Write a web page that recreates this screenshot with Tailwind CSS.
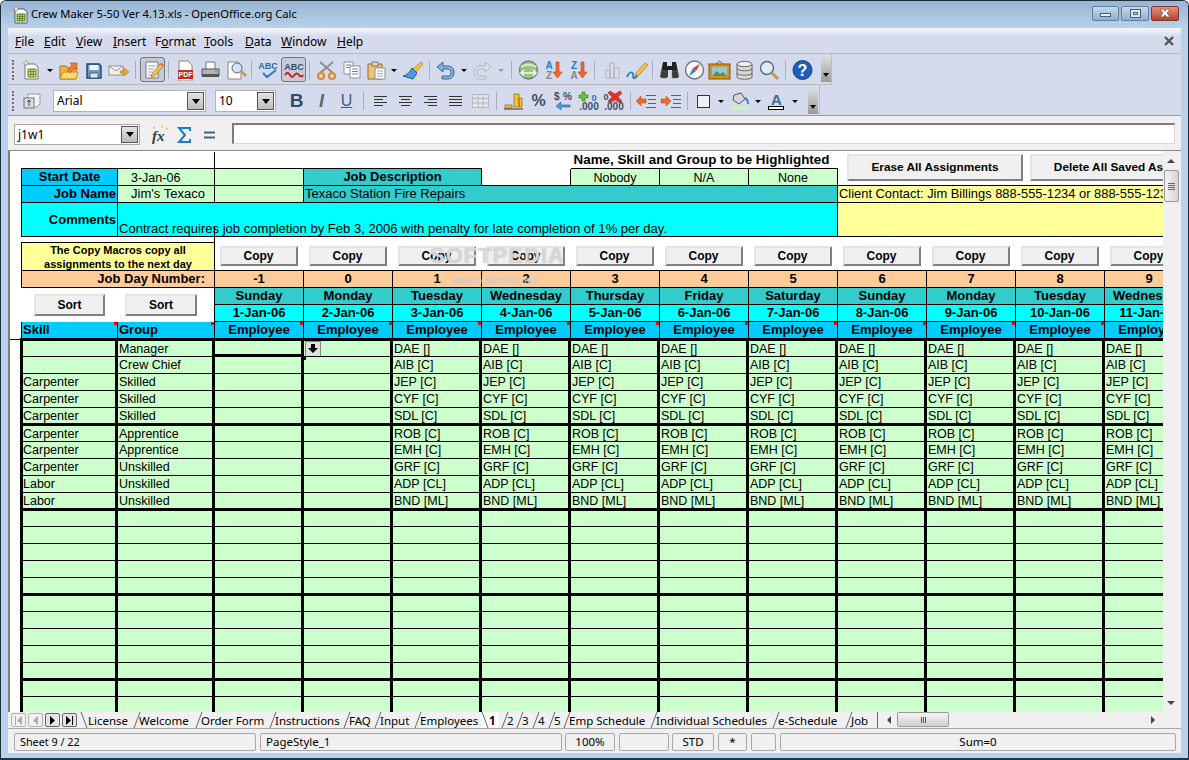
<!DOCTYPE html>
<html lang="en" class="bg-white">
<head>
  <meta charset="UTF-8" />
  <title>Crew Maker 5-50 Ver 4.13.xls - OpenOffice.org Calc</title>
  <script src="https://cdn.jsdelivr.net/npm/@tailwindcss/browser@4"></script>
</head>
<body class="w-[1189px] h-[760px] overflow-hidden rounded-t-[6px] border border-b-2 border-[#1d2f3d] border-b-[#16384a] bg-[#b9d1ea] font-['Noto_Sans',sans-serif] text-[12px] text-black">

  <!-- title bar -->
  <header class="h-[27px] flex items-center pl-[11px] bg-linear-to-b from-[#98b5d3] to-[#b9d1ea]">
    <svg class="w-[18px] h-[18px]" viewBox="0 0 18 18"><path d="M3 3h9l3 3v11H3z" fill="#fff" stroke="#555"/><path d="M5 8h8v7H5z" fill="#e4ea8c" stroke="#4d7a1c"/><path d="M7.7 8v7M10.3 8v7M5 10.3h8M5 12.7h8" stroke="#4d7a1c"/><path d="M4 0l1 2 2 1-2 1-1 2-1-2-2-1 2-1z" fill="#efe7b0" stroke="#777" stroke-width=".5"/></svg>
    <span class="ml-px text-[11.2px]">Crew Maker 5-50 Ver 4.13.xls - OpenOffice.org Calc</span>
    <div class="ml-auto flex mr-[9px] mb-[3px] gap-[2px]">
      <div class="w-[27px] h-[15px] rounded-[2px] border border-[#5f7f9f] bg-linear-to-b from-[#c5d9ee] to-[#8fb0d2] flex items-center justify-center"><div class="w-[11px] h-[4px] mt-[4px] bg-[#e8eef5] border border-[#4a5f78]"></div></div>
      <div class="w-[28px] h-[15px] rounded-[2px] border border-[#5f7f9f] bg-linear-to-b from-[#c5d9ee] to-[#8fb0d2] flex items-center justify-center"><div class="w-[11px] h-[9px] bg-[#dfe8f2] border border-[#4a5f78] flex items-center justify-center"><div class="w-[5px] h-[3px] border border-[#4a5f78]"></div></div></div>
      <div class="w-[28px] h-[15px] rounded-[2px] border border-[#7a3a30] bg-linear-to-b from-[#e2907f] to-[#b8412e] flex items-center justify-center">
        <svg class="w-[14px] h-[10px]" viewBox="0 0 14 10"><path d="M2 1h3l2 2 2-2h3L9 5l3 4H9L7 7 5 9H2l3-4z" fill="#fff" stroke="#6b3a32" stroke-width=".6"/></svg>
      </div>
    </div>
  </header>

  <main class="ml-[7px] w-[1173px] h-[725px] bg-[#f0f0f0] flex flex-col">
    <!-- menu -->
    <nav class="h-[26px] shrink-0 flex items-center pl-[7px] pt-[2px] bg-linear-to-b from-[#f6f8fc] to-[#d5daec] to-[35%] border-b border-[#bcbcbc] relative">
      <span class="w-[29px]"><u>F</u>ile</span>
      <span class="w-[32px]"><u>E</u>dit</span>
      <span class="w-[37px]"><u>V</u>iew</span>
      <span class="w-[42px]"><u>I</u>nsert</span>
      <span class="w-[49px]">F<u>o</u>rmat</span>
      <span class="w-[41px]"><u>T</u>ools</span>
      <span class="w-[36px]"><u>D</u>ata</span>
      <span class="w-[56px]"><u>W</u>indow</span>
      <span><u>H</u>elp</span>
      <svg class="absolute right-[7px] top-[8px] w-[10px] h-[10px]" viewBox="0 0 10 10"><path d="M1 1l8 8M9 1L1 9" stroke="#555" stroke-width="2.4"/></svg>
    </nav>

    <!-- standard toolbar -->
    <div class="h-[31px] shrink-0 bg-[#d5daec]">
      <div class="w-[824px] h-[31px] flex items-center pl-[4px] pt-px border-r border-b border-[#bcbcbc]">
        <div class="w-[2px] h-[20px] border-l-2 border-dotted border-[#6f6f6f]"></div>
        <svg class="ml-[5px] w-[25px] h-[22px]" viewBox="0 0 25 22"><path d="M6 5h10l3 3v12H6z" fill="#fff" stroke="#777"/><path d="M9 10h8v8H9z" fill="#dfe98a" stroke="#5c8a1e"/><path d="M11.7 10v8M14.3 10v8M9 12.7h8M9 15.3h8" stroke="#5c8a1e"/><path d="M7 1l1 2 2 1-2 1-1 2-1-2-2-1 2-1z" fill="#f4e9a0" stroke="#888" stroke-width=".5"/></svg>
        <svg class="w-[12px] h-[22px]" viewBox="0 0 12 22"><path d="M3 10h6l-3 3z" fill="#000"/></svg>
        <svg class="w-[25px] h-[22px]" viewBox="0 0 25 22"><path d="M4 7h6l2 2h8v11H4z" fill="#f2b83c" stroke="#a8781c"/><path d="M4 20l3-7h15l-2 7z" fill="#ffd86e" stroke="#c08c24"/><path d="M11 11l5-5-2-2h7v7l-2-2-5 5z" fill="#ee7d2b" stroke="#b2521a" stroke-width=".6"/></svg>
        <svg class="w-[25px] h-[22px]" viewBox="0 0 25 22"><path d="M6 5h12l2 2v12H6z" fill="#6f9cc2" stroke="#1d4468" stroke-width="1.400"/><rect x="8.500" y="6" width="9" height="5" fill="#f2f6fa"/><rect x="9" y="14" width="8" height="5" fill="#dde3e9" stroke="#1d4468" stroke-width=".7"/></svg>
        <svg class="w-[25px] h-[22px]" viewBox="0 0 25 22"><rect x="3" y="7" width="14" height="9" fill="#f3f3f3" stroke="#909090"/><path d="M3 7l7 5 7-5" fill="none" stroke="#909090"/><path d="M14 12h4v-3l5 4-5 4v-3h-4z" fill="#f2a93b" stroke="#b8741a" stroke-width=".7"/></svg>
        <div class="ml-[4px] mr-[4px] w-px h-[18px] bg-[#a9adbd]"></div>
        <div class="w-[25px] h-[25px] rounded-[3px] border border-[#777] bg-[#c6cad8] flex items-center justify-center">
          <svg class="w-[22px] h-[22px]" viewBox="0 0 22 22"><path d="M4 3h12v16H4z" fill="#fff" stroke="#777"/><path d="M6 7h8M6 10h6M6 13h5M6 16h5" stroke="#8aa0b8"/><path d="M10 15l8-10 3 2-8 10-4 1.500z" fill="#f6c542" stroke="#a06a20" stroke-width=".7"/><path d="M18 5l3 2 1-1.500-3-2z" fill="#e46a5a"/></svg>
        </div>
        <div class="ml-[3px] mr-[4px] w-px h-[18px] bg-[#a9adbd]"></div>
        <svg class="w-[25px] h-[22px]" viewBox="0 0 25 22"><path d="M6 2h9l4 4v16H6z" fill="#fff" stroke="#888"/><rect x="5" y="11" width="15" height="9" fill="#cc2a1e"/><text x="12.500" y="18" text-anchor="middle" font-size="7" font-weight="700" font-family="Liberation Sans" fill="#fff">PDF</text></svg>
        <svg class="w-[25px] h-[22px]" viewBox="0 0 25 22"><path d="M8 3h9v8H8z" fill="#fff" stroke="#777"/><path d="M4 10h17v7H4z" fill="#b4b4b4" stroke="#555"/><path d="M4 15h17v3H4z" fill="#555"/><circle cx="18" cy="12.500" r="1" fill="#55c04a"/></svg>
        <svg class="w-[25px] h-[22px]" viewBox="0 0 25 22"><path d="M5 3h10l3 3v14H5z" fill="#fff" stroke="#888"/><circle cx="14" cy="9" r="5" fill="#cfe4f5" stroke="#667"/><path d="M18 12l5 5" stroke="#c79a3c" stroke-width="2.500"/></svg>
        <div class="ml-[3px] mr-[4px] w-px h-[18px] bg-[#a9adbd]"></div>
        <svg class="w-[25px] h-[22px]" viewBox="0 0 25 22"><text x="12" y="10" text-anchor="middle" font-size="9" font-weight="700" font-family="Liberation Sans" fill="#2f6a9f">ABC</text><path d="M7 14l4 4 9-7" fill="none" stroke="#2d7fc4" stroke-width="2.200"/></svg>
        <div class="w-[25px] h-[25px] rounded-[3px] border border-[#777] bg-[#c6cad8] flex items-center justify-center">
          <svg class="w-[22px] h-[20px]" viewBox="0 0 22 20"><text x="11" y="10" text-anchor="middle" font-size="9" font-weight="700" font-family="Liberation Sans" fill="#2f4f6f">ABC</text><path d="M2 15c2-3 3-3 5 0s3 2 4.500 0 3-2 4.500 0 3 2 4 0" fill="none" stroke="#cc1f1f" stroke-width="2"/></svg>
        </div>
        <div class="ml-[3px] mr-[4px] w-px h-[18px] bg-[#a9adbd]"></div>
        <svg class="w-[25px] h-[22px]" viewBox="0 0 25 22"><path d="M6 3l13 11M19 3L6 14" stroke="#8a8f96" stroke-width="2"/><circle cx="7" cy="17" r="3" fill="none" stroke="#e08a2a" stroke-width="2.200"/><circle cx="18" cy="17" r="3" fill="none" stroke="#e08a2a" stroke-width="2.200"/></svg>
        <svg class="w-[25px] h-[22px]" viewBox="0 0 25 22"><path d="M5 3h9v12H5z" fill="#fff" stroke="#8a8f96"/><path d="M11 7h10v12H11z" fill="#fff" stroke="#8a8f96"/><path d="M13 10h6M13 12.500h6M13 15h6M7 6h5M7 8.500h3" stroke="#4a8fc8"/></svg>
        <svg class="w-[25px] h-[22px]" viewBox="0 0 25 22"><path d="M4 5h14v15H4z" fill="#ecc277" stroke="#8e6a2c"/><path d="M8 3h6v4H8z" fill="#d8d8d8" stroke="#777"/><path d="M11 9h10v11H11z" fill="#fff" stroke="#8a8f96"/><path d="M13 12h6M13 14.500h6M13 17h6" stroke="#9aa"/></svg>
        <svg class="w-[11px] h-[22px]" viewBox="0 0 11 22"><path d="M2 10h6l-3 3z" fill="#000"/></svg>
        <svg class="w-[25px] h-[22px]" viewBox="0 0 25 22"><path d="M13 10l8-7 2 2-7 8z" fill="#f3c440" stroke="#a8781c" stroke-width=".7"/><path d="M12 9l5 5-4 6-10-3c4-1 6-3 9-8z" fill="#4f9ad8" stroke="#24608f"/></svg>
        <div class="ml-[4px] mr-[3px] w-px h-[18px] bg-[#a9adbd]"></div>
        <svg class="w-[25px] h-[22px]" viewBox="0 0 25 22"><path d="M10 3L4 8l6 5v-3h5c2 0 3 1.500 3 3.500S17 17 15 17H9v3h6c4 0 6-3 6-6.500S19 7 15 7h-5z" fill="#7eb2d8" stroke="#356a94"/></svg>
        <svg class="w-[12px] h-[22px]" viewBox="0 0 12 22"><path d="M3 10h6l-3 3z" fill="#000"/></svg>
        <svg class="w-[25px] h-[22px]" viewBox="0 0 25 22"><path d="M15 3l6 5-6 5v-3h-5c-2 0-3 1.500-3 3.500S8 17 10 17h6v3h-6c-4 0-6-3-6-6.500S6 7 10 7h5z" fill="#dcdfe8" stroke="#b0b4c0"/></svg>
        <svg class="w-[12px] h-[22px]" viewBox="0 0 12 22"><path d="M3 10h6l-3 3z" fill="#9a9a9a"/></svg>
        <div class="ml-[4px] mr-[4px] w-px h-[18px] bg-[#a9adbd]"></div>
        <svg class="w-[25px] h-[22px]" viewBox="0 0 25 22"><circle cx="12.500" cy="11" r="9" fill="#9cc47a" stroke="#6a7f8a" stroke-width="1.400"/><path d="M5 8c3-3 12-3 15 0" fill="none" stroke="#dfe8c0" stroke-width="2"/><path d="M6 14h13M8 11l-3 3 3 3M17 11l3 3-3 3" fill="none" stroke="#eef3f6" stroke-width="1.600"/></svg>
        <svg class="w-[25px] h-[22px]" viewBox="0 0 25 22"><text x="8" y="10" text-anchor="middle" font-size="10" font-weight="700" font-family="Liberation Sans" fill="#2280d0">A</text><text x="8" y="20" text-anchor="middle" font-size="10" font-weight="700" font-family="Liberation Sans" fill="#888">Z</text><path d="M15 3h3v10h3l-4.500 6L12 13h3z" fill="#ee6a2b" stroke="#b2421a" stroke-width=".6"/></svg>
        <svg class="w-[25px] h-[22px]" viewBox="0 0 25 22"><text x="8" y="10" text-anchor="middle" font-size="10" font-weight="700" font-family="Liberation Sans" fill="#2280d0">Z</text><text x="8" y="20" text-anchor="middle" font-size="10" font-weight="700" font-family="Liberation Sans" fill="#888">A</text><path d="M15 3h3v10h3l-4.500 6L12 13h3z" fill="#ee6a2b" stroke="#b2421a" stroke-width=".6"/></svg>
        <div class="ml-[3px] mr-[5px] w-px h-[18px] bg-[#a9adbd]"></div>
        <svg class="w-[25px] h-[22px]" viewBox="0 0 25 22"><path d="M6 11h4v8H6zM10 4h4v15h-4zM14 9h5v10h-5z" fill="#dcdfe8" stroke="#aeb2bd"/></svg>
        <svg class="w-[25px] h-[22px]" viewBox="0 0 25 22"><path d="M2 18c2-5 5-6 6-3s-1 4 1 4 3-2 4-3" fill="none" stroke="#2d7fc4" stroke-width="1.800"/><path d="M11 14L20 4l3 2-9 10-4 1z" fill="#f6c542" stroke="#a06a20" stroke-width=".7"/></svg>
        <div class="ml-[2px] mr-[4px] w-px h-[18px] bg-[#a9adbd]"></div>
        <svg class="w-[25px] h-[22px]" viewBox="0 0 25 22"><path d="M6 3h4v4h5V3h4l3 15h-7v-7h-4v7H3z" fill="#222"/><path d="M4 12h6v7H4zM15 12h6v7h-6z" fill="#3a3a3a" stroke="#777" stroke-width=".5"/></svg>
        <svg class="w-[25px] h-[22px]" viewBox="0 0 25 22"><circle cx="12.500" cy="11" r="9" fill="#f4f6f8" stroke="#70787f" stroke-width="1.400"/><path d="M18 5l-4 7-3-3z" fill="#e23a2e"/><path d="M7 17l4-8 3 3z" fill="#2d7fc4"/></svg>
        <svg class="w-[25px] h-[22px]" viewBox="0 0 25 22"><path d="M9 5l3.500-3L16 5" fill="none" stroke="#666"/><rect x="2" y="5" width="21" height="15" fill="#d8921e" stroke="#7c5210"/><rect x="5" y="8" width="15" height="9" fill="#8fc6ea"/><path d="M5 17l5-5 3 3 3-2 4 4z" fill="#4e9a36"/></svg>
        <svg class="w-[25px] h-[22px]" viewBox="0 0 25 22"><path d="M5 5v13c0 3 15 3 15 0V5z" fill="#d8d8d4" stroke="#666"/><ellipse cx="12.500" cy="5" rx="7.500" ry="2.600" fill="#f0f0ec" stroke="#666"/><path d="M5 9.500c0 3 15 3 15 0M5 14c0 3 15 3 15 0" fill="none" stroke="#666"/></svg>
        <svg class="w-[25px] h-[22px]" viewBox="0 0 25 22"><circle cx="10" cy="9" r="6.500" fill="#dcecf8" stroke="#5f6a74" stroke-width="1.400"/><path d="M15 14l6 6" stroke="#c79a3c" stroke-width="3"/></svg>
        <div class="ml-[3px] mr-[4px] w-px h-[18px] bg-[#a9adbd]"></div>
        <svg class="w-[25px] h-[22px]" viewBox="0 0 25 22"><circle cx="12.500" cy="11" r="9.500" fill="#1f5fc0" stroke="#16407e"/><text x="12.500" y="17" text-anchor="middle" font-size="16" font-weight="700" font-family="Liberation Sans" fill="#fff">?</text></svg>
        <div class="ml-[6px] w-[10px] h-[25px] bg-linear-to-b from-[#dcdcdc] to-[#9a9a9a] flex items-end justify-center pb-[5px]"><div class="w-0 h-0 border-x-[3px] border-t-[4px] border-x-transparent border-t-black"></div></div>
      </div>
    </div>

    <!-- formatting toolbar -->
    <div class="h-[31px] shrink-0 bg-[#d5daec] border-b border-[#9c9c9c]">
      <div class="w-[812px] h-[30px] flex items-center pl-[4px] pt-[2px] border-r border-[#bcbcbc]">
        <div class="w-[2px] h-[20px] border-l-2 border-dotted border-[#6f6f6f]"></div>
        <svg class="ml-[5px] w-[25px] h-[22px]" viewBox="0 0 25 22"><path d="M9 4h12v10l-3 3H9z" fill="#f4f4f4" stroke="#9a9a9a"/><rect x="5" y="8" width="10" height="10" fill="#d8dce4" stroke="#777"/><path d="M10 10v6M8 12l2-2 2 2" fill="none" stroke="#444"/></svg>
        <div class="ml-[9px] w-[153px] h-[22px] bg-white border border-[#b4b4b4] flex items-center pl-[3px] text-[12px]"><span>Arial</span>
          <div class="ml-auto w-[17px] h-[18px] mr-px border border-[#555] bg-linear-to-b from-[#e4e4e4] to-[#bcbcbc] flex items-center justify-center"><div class="w-0 h-0 border-x-[4px] border-t-[5px] border-x-transparent border-t-black"></div></div>
        </div>
        <div class="ml-[9px] w-[61px] h-[22px] bg-white border border-[#b4b4b4] flex items-center pl-[3px] text-[12px]"><span>10</span>
          <div class="ml-auto w-[17px] h-[18px] mr-px border border-[#555] bg-linear-to-b from-[#e4e4e4] to-[#bcbcbc] flex items-center justify-center"><div class="w-0 h-0 border-x-[4px] border-t-[5px] border-x-transparent border-t-black"></div></div>
        </div>
        <span class="ml-[8px] w-[25px] text-center font-['Liberation_Sans',sans-serif] text-[19px] font-bold text-[#2f4f6f]">B</span>
        <span class="w-[25px] text-center font-['Liberation_Sans',sans-serif] text-[18px] font-bold italic text-[#556a7c]">I</span>
        <span class="w-[25px] text-center font-['Liberation_Sans',sans-serif] text-[16px] underline text-[#3c5f80]">U</span>
        <div class="ml-[4px] mr-[4px] w-px h-[18px] bg-[#a9adbd]"></div>
        <svg class="w-[25px] h-[22px]" viewBox="0 0 25 22"><path d="M6 6.500h13M6 9.500h9M6 12.500h13M6 15.500h9" stroke="#333"/></svg>
        <svg class="w-[25px] h-[22px]" viewBox="0 0 25 22"><path d="M6 6.500h13M8 9.500h9M6 12.500h13M8 15.500h9" stroke="#333"/></svg>
        <svg class="w-[25px] h-[22px]" viewBox="0 0 25 22"><path d="M6 6.500h13M10 9.500h9M6 12.500h13M10 15.500h9" stroke="#333"/></svg>
        <svg class="w-[25px] h-[22px]" viewBox="0 0 25 22"><path d="M6 6.500h13M6 9.500h13M6 12.500h13M6 15.500h13" stroke="#333"/></svg>
        <svg class="w-[25px] h-[22px]" viewBox="0 0 25 22"><path d="M4.500 4.500h16v13h-16zM4.500 8.500h16M4.500 13h16M10 4.500v13M15 4.500v13" fill="#e2e4ec" stroke="#b4b8c4"/></svg>
        <div class="ml-[3px] mr-[4px] w-px h-[18px] bg-[#a9adbd]"></div>
        <svg class="w-[25px] h-[22px]" viewBox="0 0 25 22"><path d="M13 4h5v13h-5zM18 8h3v9h-3z" fill="#f2c230" stroke="#8e6a10" stroke-width=".7"/><path d="M4 15h7v3H4z" fill="#f2c230" stroke="#8e6a10" stroke-width=".7"/><path d="M3 19h19" stroke="#333"/></svg>
        <span class="w-[25px] text-center font-['Liberation_Sans',sans-serif] text-[16px] font-bold text-[#3c5068]">%</span>
        <svg class="w-[25px] h-[22px]" viewBox="0 0 25 22"><text x="3" y="10" font-size="10" font-weight="700" font-family="Liberation Sans" fill="#3c5068">$</text><text x="12" y="10" font-size="10" font-weight="700" font-family="Liberation Sans" fill="#3c5068">%</text><path d="M19 15h-9v-3l-5 4 5 4v-3h9z" fill="#4f9ad8" stroke="#24608f" stroke-width=".6"/></svg>
        <svg class="w-[25px] h-[22px]" viewBox="0 0 25 22"><path d="M6 2h3v3h3v3H9v3H6V8H3V5h3z" fill="#6cc03a" stroke="#3a7a1c" stroke-width=".6"/><text x="18" y="11" font-size="9" font-weight="700" font-family="Liberation Sans" fill="#2d6fc0" text-anchor="middle">0</text><text x="13" y="20" font-size="10" font-weight="700" font-family="Liberation Sans" fill="#3c5068" text-anchor="middle">.000</text></svg>
        <svg class="w-[25px] h-[22px]" viewBox="0 0 25 22"><text x="5" y="10" font-size="9" font-weight="700" font-family="Liberation Sans" fill="#3c5068" text-anchor="middle">0</text><path d="M9 1l5 3 5-3 2 2-4 4 4 4-2 2-5-3-5 3-2-2 4-4-4-4z" fill="#e2332a" stroke="#9a1f18" stroke-width=".5"/><text x="13" y="20" font-size="10" font-weight="700" font-family="Liberation Sans" fill="#3c5068" text-anchor="middle">.000</text></svg>
        <div class="ml-[4px] mr-[3px] w-px h-[18px] bg-[#a9adbd]"></div>
        <svg class="w-[25px] h-[22px]" viewBox="0 0 25 22"><path d="M12 5.500h10M14 9.500h8M14 13.500h8M12 17.500h10" stroke="#3a6a9a"/><path d="M12 9h-5V6l-5 5 5 5v-3h5z" fill="#ee6a2b" stroke="#b2421a" stroke-width=".5"/></svg>
        <svg class="w-[25px] h-[22px]" viewBox="0 0 25 22"><path d="M12 5.500h10M14 9.500h8M14 13.500h8M12 17.500h10" stroke="#3a6a9a"/><path d="M2 9h5V6l5 5-5 5v-3H2z" fill="#ee6a2b" stroke="#b2421a" stroke-width=".5"/></svg>
        <div class="ml-[3px] mr-[3px] w-px h-[18px] bg-[#a9adbd]"></div>
        <svg class="w-[25px] h-[22px]" viewBox="0 0 25 22"><rect x="6.500" y="5.500" width="12" height="12" fill="#eef0f6" stroke="#333"/></svg>
        <svg class="w-[11px] h-[22px]" viewBox="0 0 11 22"><path d="M2 10h6l-3 3z" fill="#000"/></svg>
        <svg class="w-[25px] h-[22px]" viewBox="0 0 25 22"><rect x="4" y="16" width="16" height="4" fill="#c8f4c0"/><path d="M7 5l7-2 4 6-6 5-6-4z" fill="#d4d8de" stroke="#555"/><path d="M18 8c2 1 3 3 3 6" fill="none" stroke="#3a8ac8" stroke-width="2"/></svg>
        <svg class="w-[12px] h-[22px]" viewBox="0 0 12 22"><path d="M3 10h6l-3 3z" fill="#000"/></svg>
        <svg class="w-[25px] h-[22px]" viewBox="0 0 25 22"><text x="12.500" y="15" font-size="15" font-weight="700" font-family="Liberation Sans" fill="#3c6a90" text-anchor="middle">A</text><rect x="4.500" y="16.500" width="15" height="3" fill="#fff" stroke="#000"/></svg>
        <svg class="w-[12px] h-[22px]" viewBox="0 0 12 22"><path d="M3 10h6l-3 3z" fill="#000"/></svg>
        <div class="ml-[7px] w-[10px] h-[25px] bg-linear-to-b from-[#dcdcdc] to-[#9a9a9a] flex items-end justify-center pb-[5px]"><div class="w-0 h-0 border-x-[3px] border-t-[4px] border-x-transparent border-t-black"></div></div>
      </div>
    </div>

    <!-- formula bar -->
    <div class="h-[35px] shrink-0 flex items-start pt-[8px] pl-[6px] border-b border-[#8a8a8a]">
      <div class="w-[126px] h-[21px] bg-white border border-[#a8a8a8] flex items-center pl-[3px]"><span>j1w1</span>
        <div class="ml-auto w-[17px] h-[17px] mr-px border border-[#555] bg-linear-to-b from-[#e4e4e4] to-[#bcbcbc] flex items-center justify-center"><div class="w-0 h-0 border-x-[4px] border-t-[5px] border-x-transparent border-t-black"></div></div>
      </div>
      <svg class="ml-[7px] w-[25px] h-[22px]" viewBox="0 0 25 22"><text x="5" y="17" font-size="15" font-style="italic" font-weight="700" font-family="Liberation Serif" fill="#2c3c50">fx</text><path d="M7 2l1 1.500L7 5 6 3.500zM15 1l1 1.500-1 1.500-1-1.500zM20 3l1 1.500-1 1.500-1-1.500z" fill="#e8b830"/></svg>
      <svg class="w-[25px] h-[22px]" viewBox="0 0 25 22"><path d="M18 7V4H7l6 7-6 7h11v-3" fill="none" stroke="#1a7fc4" stroke-width="2"/></svg>
      <svg class="w-[25px] h-[22px]" viewBox="0 0 25 22"><path d="M7 8.500h11M7 13.500h11" stroke="#4a5f70" stroke-width="2"/></svg>
      <div class="-mt-px ml-[10px] w-[943px] h-[21px] bg-white border border-[#d8d8d8] border-t-2 border-t-[#7c7c7c] border-l-2 border-l-[#7c7c7c]"></div>
    </div>

    <!-- sheet and vertical scrollbar -->
    <div class="h-[561px] shrink-0 flex">
      <div class="w-[2px] bg-[#808080]"></div>
      <div id="sheet" class="relative w-[1153px] h-[561px] pt-px overflow-hidden bg-white font-['Liberation_Sans',sans-serif]"></div>
      <div class="w-[16px] flex flex-col items-center">
        <div class="h-[19px] flex items-center"><div class="w-0 h-0 border-x-[4px] border-b-[4px] border-x-transparent border-b-[#444]"></div></div>
        <div class="w-[15px] h-[32px] rounded-[2px] border border-[#9a9a9a] bg-linear-to-r from-[#f4f4f4] to-[#d4d4d4] flex flex-col items-center justify-center gap-[1px]">
          <div class="w-[7px] h-px bg-[#666]"></div><div class="w-[7px] h-px bg-[#666]"></div><div class="w-[7px] h-px bg-[#666]"></div><div class="w-[7px] h-px bg-[#666]"></div>
        </div>
        <div class="mt-auto h-[18px] flex items-center"><div class="w-0 h-0 border-x-[4px] border-t-[4px] border-x-transparent border-t-[#444]"></div></div>
      </div>
    </div>

    <!-- sheet tabs and horizontal scrollbar -->
    <div class="h-[17px] shrink-0 flex items-start pl-[3px] border-b border-[#a8a8a8] overflow-hidden">
      <div class="flex gap-[2px] w-[69px] pt-px">
        <div class="w-[15px] h-[14px] rounded-[2px] border border-[#b4b4b4] text-[#aaa] flex items-center justify-center"><svg class="w-[9px] h-[9px]" viewBox="0 0 9 9"><path d="M1 0h1v9H1zM8 0v9L3 4.500z" fill="currentColor"/></svg></div>
        <div class="w-[15px] h-[14px] rounded-[2px] border border-[#b4b4b4] text-[#aaa] flex items-center justify-center"><svg class="w-[9px] h-[9px]" viewBox="0 0 9 9"><path d="M7 0v9L2 4.500z" fill="currentColor"/></svg></div>
        <div class="w-[15px] h-[14px] rounded-[2px] border border-[#666] bg-[#e4e4e4] flex items-center justify-center"><svg class="w-[9px] h-[9px]" viewBox="0 0 9 9"><path d="M2 0v9l5-4.500z" fill="#000"/></svg></div>
        <div class="w-[15px] h-[14px] rounded-[2px] border border-[#666] bg-[#e4e4e4] flex items-center justify-center"><svg class="w-[9px] h-[9px]" viewBox="0 0 9 9"><path d="M1 0v9l5-4.500zM7 0h1v9H7z" fill="#000"/></svg></div>
      </div>
      <div id="tabs" class="flex h-[16px] font-['Noto_Sans',sans-serif] text-[11.5px] leading-[17px]"></div>
      <div class="w-[2px] h-[16px] ml-px border-l border-[#666]"></div>
      <div class="ml-[8px] w-0 h-0 mt-[4px] border-y-[4px] border-r-[4px] border-y-transparent border-r-[#444]"></div>
      <div class="ml-[6px] w-[52px] h-[15px] rounded-[2px] border border-[#9a9a9a] bg-linear-to-b from-[#f4f4f4] to-[#d0d0d0] flex items-center justify-center gap-[1px]">
        <div class="w-px h-[6px] bg-[#555]"></div><div class="w-px h-[6px] bg-[#555]"></div><div class="w-px h-[6px] bg-[#555]"></div>
      </div>
      <div class="ml-[202px] w-0 h-0 mt-[4px] border-y-[4px] border-l-[4px] border-y-transparent border-l-[#444]"></div>
    </div>

    <!-- status bar -->
    <footer class="h-[24px] shrink-0 flex gap-[4px] pt-[4px] pl-[6px] text-[11.5px] leading-[16px]">
      <div class="w-[242px] h-[18px] pl-[5px] text-[10.8px] rounded-[2px] border border-[#a8a8a8]">Sheet 9 / 22</div>
      <div class="w-[302px] h-[18px] pl-[5px] rounded-[2px] border border-[#a8a8a8]">PageStyle_1</div>
      <div class="-ml-px w-[50px] h-[18px] text-center rounded-[2px] border border-[#a8a8a8]">100%</div>
      <div class="w-[50px] h-[18px] rounded-[2px] border border-[#a8a8a8]"></div>
      <div class="-ml-px w-[42px] h-[18px] text-center rounded-[2px] border border-[#a8a8a8]">STD</div>
      <div class="w-[29px] h-[18px] text-center rounded-[2px] border border-[#a8a8a8]">*</div>
      <div class="w-[25px] h-[18px] rounded-[2px] border border-[#a8a8a8]"></div>
      <div class="w-[396px] h-[18px] text-center rounded-[2px] border border-[#a8a8a8]">Sum=0</div>
    </footer>
  </main>

  <script>
    const teal = 'bg-[#33cccc]', cyan = 'bg-[#00ffff]', sky = 'bg-[#00ccff]', green = 'bg-[#ccffcc]', butter = 'bg-[#ffff99]', peach = 'bg-[#ffcc99]';
    const box = 'border-r border-b border-black';
    const thin = 'text-[12.5px] whitespace-nowrap overflow-hidden';
    const wide = 'text-[13.05px] leading-[16px] whitespace-nowrap overflow-hidden';
    const bold = 'text-[13px] font-bold whitespace-nowrap overflow-hidden flex items-center justify-center';
    const btn = 'flex items-center justify-center bg-[#f0f0f0] border-2 border-t-[#e4e4e4] border-l-[#e4e4e4] border-r-[#808080] border-b-[#808080] font-bold';

    const cell = (cls, txt = '') => `<div class="${cls}">${txt}</div>`;
    const red = '<div class="absolute top-0 right-0 w-[3px] h-[3px] bg-[#ff0000]"></div>';
    const days = ['Sunday', 'Monday', 'Tuesday', 'Wednesday', 'Thursday', 'Friday', 'Saturday', 'Sunday', 'Monday', 'Tuesday', 'Wednesday'];
    const spacer = '<div></div>';

    let head = '';
    // row 1
    head += spacer + cell('col-span-2 border-r border-b border-black') + cell('col-span-3 border-b border-black') + spacer
      + cell(`col-span-3 border-b border-black ${bold} text-[13.4px]! pr-[6px]`, 'Name, Skill and Group to be Highlighted') + cell('col-span-4');
    // row 2
    head += spacer + cell(`${sky} ${box} border-l ${bold}`, 'Start Date') + cell(`${green} ${box} ${thin} pl-[13px]`, '3-Jan-06') + cell(`${green} ${box}`)
      + cell(`col-span-2 ${teal} ${box} ${bold}`, 'Job Description') + cell(box)
      + cell(`${green} ${box} ${thin} text-center`, 'Nobody') + cell(`${green} ${box} ${thin} text-center`, 'N/A') + cell(`${green} ${box} ${thin} text-center`, 'None')
      + cell('col-span-4 border-b border-black');
    // row 3
    head += spacer + cell(`${sky} ${box} border-l ${bold} justify-end! pr-px`, 'Job Name') + cell(`${green} ${box} ${wide} pl-[13px]`, 'Jim&#39;s Texaco') + cell(`${green} ${box}`)
      + cell(`col-span-6 ${teal} ${box} ${wide} pl-px`, 'Texaco Station Fire Repairs')
      + cell(`col-span-4 ${butter} border-b border-black ${wide} text-[12.9px]! pl-px`, 'Client Contact: Jim Billings 888-555-1234 or 888-555-1234');
    // row 4
    head += spacer + cell(`${cyan} ${box} border-l ${bold} justify-end! pr-px`, 'Comments')
      + cell(`col-span-8 ${cyan} ${box} ${wide} leading-[14px]! flex items-end pl-px`, 'Contract requires job completion by Feb 3, 2006 with penalty for late completion of 1% per day.')
      + cell(`col-span-4 ${butter} border-b border-black`);
    // row 5 gap
    head += spacer + cell('col-span-2 border-r border-b border-black') + cell('col-span-11');
    // row 6 copy
    head += spacer + cell(`col-span-2 ${butter} ${box} border-l text-[11px] font-bold leading-[14px] text-center flex items-center justify-center`, 'The Copy Macros copy all<br>assignments to the next day');
    days.forEach(() => { head += cell('border-b border-black flex justify-center pt-[3px] pr-[2px]', `<div class="w-[78px] h-[20px] text-[12px] ${btn}">Copy</div>`); });
    // row 7 day number
    head += spacer + cell(`col-span-2 ${peach} ${box} border-l ${bold} justify-end! pr-[9px]`, 'Job Day Number:');
    days.forEach((d, i) => { head += cell(`${peach} ${box} ${bold}`, i - 1); });
    // rows 8 and 9
    head += spacer + cell('row-span-2 pl-[13px] pt-[6px]', `<div class="w-[71px] h-[22px] text-[12px] ${btn}">Sort</div>`)
      + cell('row-span-2 border-r border-black pl-[7px] pt-[6px]', `<div class="w-[72px] h-[22px] text-[12px] ${btn}">Sort</div>`);
    days.forEach(d => { head += cell(`${teal} ${box} ${bold}`, d); });
    head += spacer;
    days.forEach((d, i) => { head += cell(`${cyan} ${box} ${bold}`, `${i + 1}-Jan-06`); });
    // row 10 header
    head += spacer + cell(`relative ${sky} border-l border-r border-black ${bold} justify-start! pl-px`, 'Skill' + red)
      + cell(`relative ${sky} border-r border-black ${bold} justify-start! pl-px`, 'Group' + red);
    days.forEach(() => { head += cell(`relative ${sky} border-r border-black ${bold}`, 'Employee' + red); });

    // data rows
    const people = [['', 'Manager', 'DAE []'], ['', 'Crew Chief', 'AIB [C]'], ['Carpenter', 'Skilled', 'JEP [C]'], ['Carpenter', 'Skilled', 'CYF [C]'], ['Carpenter', 'Skilled', 'SDL [C]'],
      ['Carpenter', 'Apprentice', 'ROB [C]'], ['Carpenter', 'Apprentice', 'EMH [C]'], ['Carpenter', 'Unskilled', 'GRF [C]'], ['Labor', 'Unskilled', 'ADP [CL]'], ['Labor', 'Unskilled', 'BND [ML]']];
    let body = '';
    for (let r = 0; r < 22; r++) {
      const p = people[r] || ['', '', ''];
      let rowCls = 'h-[17px] border-b';
      if (r === 0) rowCls = 'h-[19px] border-t-[3px] border-b';
      else if (r % 5 === 4) rowCls = 'h-[18px] border-b-[3px]';
      else if (r % 5 === 0) rowCls = 'h-[16px] border-b';
      const data = `${green} ${thin} ${rowCls} border-r-[3px] border-black leading-[17px]`;
      body += r === 0 ? '<div class="h-[2px] border-b border-black"></div>' : spacer;
      body += cell(`${data} border-l-[3px] -ml-px`, p[0]) + cell(`${data} pl-px`, p[1]);
      body += r === 0 ? cell(`${data} border-b-[3px]! relative overflow-visible!`, '<div class="absolute right-[-5px] top-[15px] w-[4px] h-[4px] bg-black"></div>') : cell(data);
      body += r === 0
        ? cell(`${data} relative`, '<div class="absolute left-[1px] top-0 w-[16px] h-[16px] bg-[#e0e0e0] border border-[#888] flex items-center justify-center"><svg class="w-[10px] h-[10px]" viewBox="0 0 10 10"><path d="M3 0h4v4h3L5 9 0 4h3z" fill="#000"/></svg></div>')
        : cell(data);
      for (let c = 0; c < 9; c++) body += cell(`${data} pl-px`, p[2]);
    }

    document.getElementById('sheet').innerHTML =
      `<div class="grid grid-cols-[11px_97px_97px_repeat(11,89px)] grid-rows-[17px_17px_17px_34px_6px_28px_17px_17px_17px_16px]">${head}</div>` +
      `<div class="grid grid-cols-[11px_97px_97px_repeat(11,89px)] items-start">${body}</div>` +
      `<div class="absolute left-[837px] top-[3px] w-[176px] h-[27px] text-[11.8px] ${btn}">Erase All Assignments</div>` +
      `<div class="absolute left-[1020px] top-[3px] w-[216px] h-[27px] text-[11.8px] ${btn}">Delete All Saved Assignments</div>` +
      '<div class="absolute left-[204px] top-[75px] w-px h-[10px] bg-black"></div>' +
      '<div class="absolute left-[420px] top-[92px] font-[&#39;Liberation_Serif&#39;,serif] text-[22px] leading-[26px] font-bold tracking-[1px] text-white/60 [text-shadow:0_0_1px_#9a9a9a]">SOFTPEDIA</div>' +
      '<div class="absolute left-[442px] top-[122px] text-[10px] text-white/60 [text-shadow:0_0_1px_#9a9a9a]">www.softpedia.com</div>';

    // tabs: name and width in px
    const tabs = [['License', 51], ['Welcome', 62], ['Order Form', 74], ['Instructions', 74], ['FAQ', 31], ['Input', 40], ['Employees', 69], ['1', 18], ['2', 15], ['3', 16], ['4', 16], ['5', 15],
      ['Emp Schedule', 87], ['Individual Schedules', 122], ['e-Schedule', 73], ['Job', 33]];
    const back = '<svg class="absolute left-0 top-0 w-[8px] h-[16px]" viewBox="0 0 8 16"><path d="M1 0l6 16" stroke="#666" fill="none"/></svg>';
    const slash = '<svg class="absolute left-[2px] top-0 w-[8px] h-[16px]" viewBox="0 0 8 16"><path d="M1 16L7 0" stroke="#666" fill="none"/></svg>';
    document.getElementById('tabs').innerHTML = tabs.map(([name, w], i) => {
      const active = name === '1';
      const edge = (i === 0 || active) ? back : slash;
      return `<div class="relative pl-[8px] whitespace-nowrap ${active ? 'bg-white font-bold' : ''}" style="width:${w}px">${edge}${name}</div>`;
    }).join('');
  </script>
</body>
</html>
